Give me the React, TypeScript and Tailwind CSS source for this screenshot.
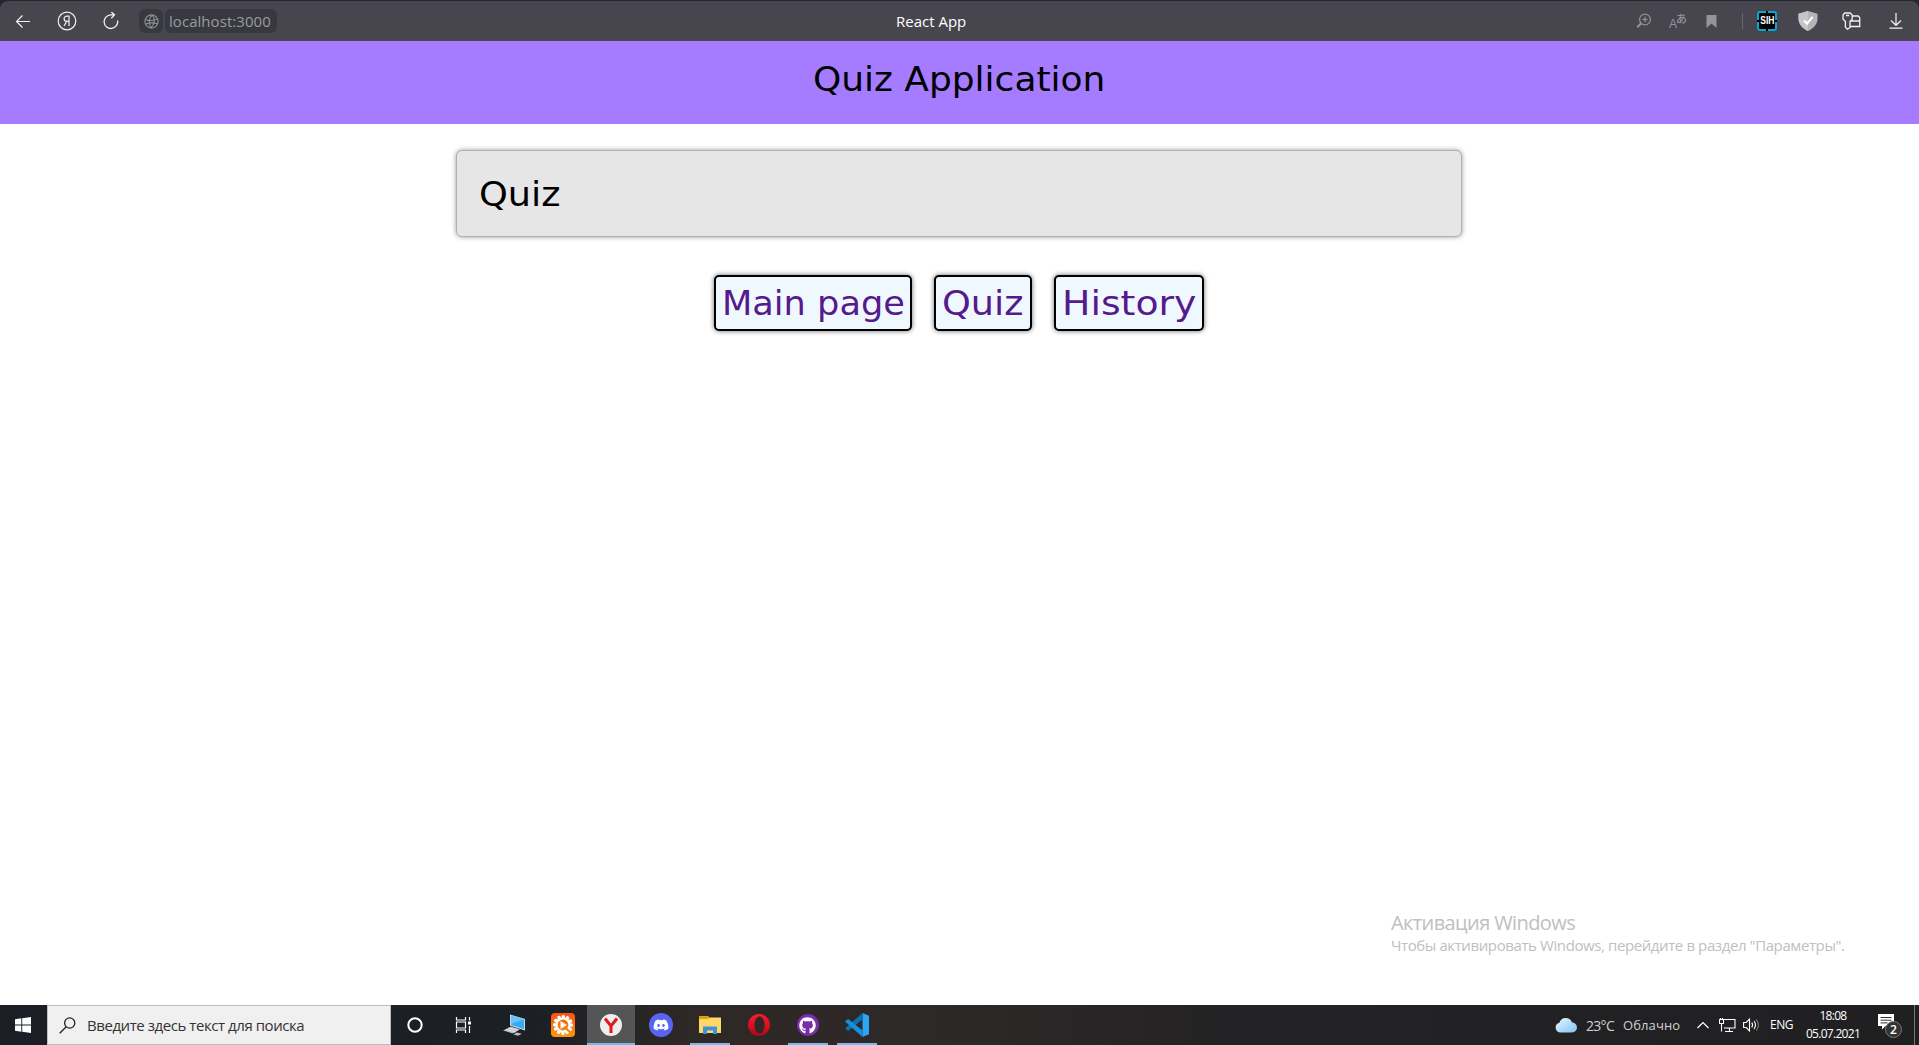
import type { ReactNode } from 'react';
import { FaDiscord, FaGithub } from 'react-icons/fa';

const ui = "font-['Open_Sans','Noto_Sans',sans-serif] whitespace-nowrap";
const display = "font-['DejaVu_Sans',sans-serif] whitespace-nowrap";

function BrowserBar() {
  return (
    <div className="flex h-[41px] shrink-0 bg-[#25252f]">
      <div className="mt-px flex h-10 w-full items-center rounded-t-lg bg-[#47464f] text-white">
        <svg className="ml-[15px] h-4 w-4" viewBox="0 0 16 16" fill="none" stroke="#f2f2f3" strokeWidth="1.2">
          <path d="M15 8.5H1.5M7.5 2.5L1.5 8.5L7.5 14.5" />
        </svg>
        <svg className="ml-[26px] h-5 w-5" viewBox="0 0 20 20" fill="none" stroke="#f2f2f3" strokeWidth="1.2">
          <circle cx="10" cy="10" r="8.8" />
          <path d="M12 15V5.2h-2c-1.9 0-2.9 1.1-2.9 2.6s1 2.6 2.9 2.6h2M9.6 10.5L7 15" />
        </svg>
        <svg className="ml-[25px] h-[18px] w-[18px]" viewBox="0 0 18 18" fill="none" stroke="#f2f2f3" strokeWidth="1.3">
          <path d="M15.6 8.5a6.8 6.8 0 1 1-6.8-5.6H12M9.3 0l3.2 2.9L9.3 6.2" />
        </svg>
        <div className="ml-[19px] flex h-6 w-6 items-center justify-center rounded-md bg-[#383840]">
          <svg className="h-[15px] w-[15px]" viewBox="0 0 15 15" fill="none" stroke="#8f8f95" strokeWidth="1.1">
            <circle cx="7.5" cy="7.5" r="6.6" />
            <path d="M8.3 1C5 3.3 4.3 9.5 6.7 14M8.3 1c2.8 3.2 2.7 9.5-1.6 13M1.2 5.4c4 1.6 8.3 1.5 12.2-.6M1.5 10.2c4-1.8 8-1.7 12.2-.2" />
          </svg>
        </div>
        <div className={`${ui} ml-[2px] flex h-6 w-28 items-center rounded-md bg-[#383840] pl-[4px] text-[15px] leading-6 text-[#9b9ba0]`}>
          <span className="tracking-[0.05px]">localhost:3000</span>
        </div>
        <span className={`${ui} ml-[619px] w-[80px] text-[15px]`}>React App</span>
        <svg className="ml-[660px] h-4 w-4" viewBox="0 0 16 16" fill="none" stroke="#94949a" strokeWidth="1.2">
          <circle cx="9" cy="6.5" r="5.4" />
          <path d="M9 3.8v5.4M6.3 6.5h5.4" />
          <path d="M5 10.5L1.2 14.3" strokeWidth="2" />
        </svg>
        <div className="ml-[17px] flex h-5 w-[19px] text-[#94949a]">
          <span className="mt-[5px] font-['Liberation_Sans',sans-serif] text-[12px] leading-4">A</span>
          <span className="-ml-px font-['Noto_Sans_CJK_JP',sans-serif] text-[11px] font-medium leading-[14px]">あ</span>
        </div>
        <svg className="ml-[18px] h-[13px] w-[11px]" viewBox="0 0 11 13"><path d="M0.5 0h10v13l-5-4.5l-5 4.5z" fill="#94949a" /></svg>
        <div className="ml-[25px] h-4 w-px bg-[#66656d]" />
        <div className="relative ml-[14px] flex h-5 w-5 items-center justify-center rounded-[3px] border-2 border-[#08a5d0] bg-black">
          <div className="absolute -top-[2px] left-[7px] h-[20px] w-[2px] bg-black" />
          <div className="absolute -left-[2px] top-[7px] h-[2px] w-[20px] bg-black" />
          <span className="relative origin-center scale-x-[0.85] font-['Liberation_Sans',sans-serif] text-[10px] font-bold leading-none">SIH</span>
        </div>
        <svg className="ml-[21px] h-5 w-5" viewBox="0 0 20 20">
          <path d="M10 0L19.5 2.8V7.5C19.5 13 15.5 17.5 10 20C4.5 17.5.5 13 .5 7.5V2.8z" fill="#b5b5b7" />
          <path d="M10 0v20C4.5 17.5.5 13 .5 7.5V2.8z" fill="#c5c5c7" />
          <path d="M6 9.5l3 3.2L14.5 6" fill="none" stroke="#fff" strokeWidth="2" />
        </svg>
        <svg className="ml-[24px] h-[18px] w-5" viewBox="0 0 20 18" fill="none" stroke="#f2f2f3" strokeWidth="1.3">
          <path d="M2.8 1h5.4L10.2 3v4.2L8 9.3V15.5L5.5 17.2L3.4 15.3V9.3L1 7.2V3zM4 3.5h3.2M10.2 4H16.2l1.5 1.5V14.5H8M8.5 9h9" />
        </svg>
        <svg className="ml-[27px] h-4 w-[14px]" viewBox="0 0 14 16" fill="none" stroke="#f2f2f3" strokeWidth="1.2">
          <path d="M7 0v12M2 7.5l5 4.8l5-4.8M.5 15.2h13" />
        </svg>
      </div>
    </div>
  );
}

function NavButton({ children, className, stretch }: { children: ReactNode; className: string; stretch: string }) {
  return (
    <a className={`${display} flex h-14 items-center rounded-[5px] border-2 border-black bg-[#f0f8ff] pl-[6px] text-[33px] text-[#551a8b] shadow-[0_0_5px_rgba(0,0,0,0.6)] ${className}`}>
      <span className={`origin-left pt-[2px] ${stretch}`}>{children}</span>
    </a>
  );
}

function Task({ children, active, running }: { children: ReactNode; active?: boolean; running?: boolean }) {
  return (
    <div className={`flex h-10 flex-col items-center ${active ? 'mr-px w-12 bg-[#555555]' : 'w-[49px]'}`}>
      <div className="flex h-[38px] w-full items-center justify-center pt-[2px]">{children}</div>
      {active && <div className="h-[2px] w-full bg-[#76b9ed]" />}
      {running && <div className="h-[2px] w-10 bg-[#76b9ed]" />}
    </div>
  );
}

function Taskbar() {
  return (
    <div className="flex h-10 shrink-0 items-center bg-[linear-gradient(90deg,#1b1e24_0%,#1c1f24_28%,#2e2826_36%,#2d2928_48%,#232224_65%,#202022_100%)] text-white">
      <div className="flex h-10 w-[47px] items-center pl-[15px]">
        <svg className="h-4 w-4" viewBox="0 0 16 16" fill="#fff">
          <path d="M0 2.2L6.3 1.3V7.5H0zM7.2 1.2L16 0V7.5H7.2zM0 8.5h6.3v6.2L0 13.8zM7.2 8.5H16V16L7.2 14.8z" />
        </svg>
      </div>
      <div className="flex h-10 w-[344px] items-center border border-[#bdbdbd] bg-[#f0f0f0] pl-[11px]">
        <svg className="h-[17px] w-[17px]" viewBox="0 0 17 17" fill="none" stroke="#222" strokeWidth="1.3">
          <circle cx="10.7" cy="6" r="5.1" />
          <path d="M7.2 9.7L.7 16.2" />
        </svg>
        <span className={`${ui} ml-[11px] text-[15px] tracking-[-0.44px] text-[#333]`}>Введите здесь текст для поиска</span>
      </div>
      <div className="-ml-px flex">
        <Task>
          <svg className="h-4 w-4" viewBox="0 0 16 16"><circle cx="8" cy="8" r="6.7" fill="none" stroke="#fff" strokeWidth="2" /></svg>
        </Task>
        <Task>
          <svg className="mr-px h-4 w-[17px]" viewBox="0 0 17 16" fill="none" stroke="#fff" strokeWidth="1.2">
            <path d="M1.5 0v3h9V0M1.5 5h9v6h-9zM1.5 16v-3h9v3M14.5 0v3.5M14.5 9v7" />
            <path d="M13 4.5h3v3h-3z" fill="#fff" stroke="none" />
          </svg>
        </Task>
        <div className="ml-px flex">
          <Task>
            <svg className="h-[22px] w-[24px]" viewBox="0 0 24 22">
              <path d="M8 .5L23 5V16.5L8 11.5z" fill="#d4eafa" />
              <path d="M8.8 1.5L22.2 5.6V15.2L8.8 10.8z" fill="#38a8f0" />
              <path d="M9 1.5L22.2 5.6L9 10z" fill="#67c4fb" />
              <path d="M9 12.5L18 15.3L11 19.5L1 16.5z" fill="#b8bec2" />
              <path d="M4 15.4l10 2.7M6.5 14l9.5 2.5" stroke="#eef1f2" strokeWidth=".8" />
              <path d="M15 18.5l5 1.3l-4 2l-4.5-1.3z" fill="#b8bec2" />
            </svg>
          </Task>
          <Task>
            <svg className="h-6 w-6" viewBox="0 0 24 24">
              <defs><linearGradient id="sun" x2="0" y2="1"><stop stopColor="#f65312" /><stop offset="1" stopColor="#ff9708" /></linearGradient></defs>
              <rect width="24" height="24" rx="4" fill="url(#sun)" />
              <circle cx="12" cy="12" r="8.4" fill="none" stroke="#fff" strokeWidth="3.4" strokeLinecap="round" strokeDasharray="0.1 4.298" />
              <circle cx="12" cy="12" r="6.6" fill="none" stroke="#fff" strokeWidth="2.4" />
              <path d="M9.5 8l6.5 4l-6.5 4z" fill="#fff" />
              <path d="M15.5 15.8l2.5 2.5" stroke="#fb7c0c" strokeWidth="2" />
            </svg>
          </Task>
          <Task active>
            <svg className="h-[22px] w-[22px]" viewBox="0 0 22 22">
              <circle cx="11" cy="11" r="11" fill="#eeeeee" />
              <path d="M5 4.5L11 12L17 4.5M11 11V19" fill="none" stroke="#e01919" strokeWidth="3" />
            </svg>
          </Task>
          <Task>
            <div className="flex h-6 w-6 items-center justify-center rounded-full bg-[#5865f2]"><FaDiscord size={16} /></div>
          </Task>
          <Task running>
            <svg className="h-[18px] w-[22px]" viewBox="0 0 22 18">
              <path d="M0 0h9l1 1.5h12V17H0z" fill="#ffd767" />
              <path d="M0 0h9l1 1.5L9 3H0z" fill="#dfa108" />
              <path d="M4 18v-7.5h14V18h-4v-3.5H8V18z" fill="#3f93d8" />
            </svg>
          </Task>
          <Task>
            <svg className="h-[22px] w-[22px]" viewBox="0 0 22 22">
              <defs><linearGradient id="opera" x2="0" y2="1"><stop stopColor="#ff1b2d" /><stop offset="1" stopColor="#b0061a" /></linearGradient></defs>
              <path fillRule="evenodd" d="M11 0a11 11 0 1 0 0 22a11 11 0 1 0 0-22zM11.5 2.5c3 0 5 3.6 5 8.5s-2 8.5-5 8.5s-5-3.6-5-8.5s2-8.5 5-8.5z" fill="url(#opera)" />
            </svg>
          </Task>
          <Task running>
            <div className="flex h-[22px] w-[22px] items-center justify-center rounded-full bg-[#7a2da8]"><FaGithub size={17} /></div>
          </Task>
          <Task running>
            <svg className="h-6 w-6" viewBox="0 0 24 24">
              <path d="M17.5 0L24 2.8V21.2L17.5 24z" fill="#2ba6f5" />
              <path d="M17.5 0V6.5L3.2 18L0 15.5z" fill="#0873b8" />
              <path d="M3.2 6L17.5 17.5V24L0 8.5z" fill="#1890dc" />
            </svg>
          </Task>
        </div>
      </div>
      <svg className="ml-[674px] h-4 w-[22px]" viewBox="0 0 22 16">
        <defs><linearGradient id="cloud" x2="1" y2="1"><stop stopColor="#eaf7ff" /><stop offset="1" stopColor="#80c2f3" /></linearGradient></defs>
        <path d="M5 15.5a5 5 0 0 1-.6-9.8A6.6 6.6 0 0 1 17 5.5a5 5 0 0 1 0 10z" fill="url(#cloud)" />
      </svg>
      <span className={`${ui} ml-[9px] w-[37px] text-[14px] tracking-[-0.7px] text-[#d0d0d0]`}>23°C</span>
      <span className={`${ui} w-[74px] pt-px text-[13px] tracking-[0.1px] text-[#d0d0d0]`}>Облачно</span>
      <svg className="h-2 w-3" viewBox="0 0 12 8" fill="none" stroke="#fff" strokeWidth="1.2"><path d="M.5 7L6 1.5L11.5 7" /></svg>
      <svg className="ml-[10px] h-[15px] w-[17px]" viewBox="0 0 17 15" fill="none" stroke="#fff" strokeWidth="1.1">
        <path d="M5 1.5h11v8.5H5M.5 1.5h4v4h-4zM2.5 5.5v8M10.5 10v3.5M6 13.5h8M1.5 0v2M3.5 0v2" />
      </svg>
      <svg className="ml-[7px] h-4 w-[17px]" viewBox="0 0 17 16" fill="none" stroke="#fff" strokeWidth="1.1">
        <path d="M.6 5.5h2.6L6.5 2.2v11.6L3.2 10.5H.6zM8.7 5.7q1.8 2.3 0 4.6M11 4q3 4 0 8" />
        <path d="M13.3 2.3q4.3 5.7 0 11.4" stroke="#777" />
      </svg>
      <span className={`${ui} ml-[10px] w-[36px] text-[12px] tracking-[-0.5px]`}>ENG</span>
      <div className={`${ui} flex h-10 w-[54px] flex-col items-center pt-[2px] text-[12px] leading-[18px] tracking-[-0.7px]`}>
        <span>18:08</span>
        <span>05.07.2021</span>
      </div>
      <div className="relative ml-[18px] h-6 w-6 pt-px">
        <svg className="h-[17px] w-[17px]" viewBox="0 0 17 17"><path d="M0 0h16v12H7.5L4 15.5V12H0z" fill="#fff" /><path d="M2.5 3.5h11M2.5 6.2h11M2.5 8.9h7" stroke="#333" /></svg>
        <span className={`${ui} absolute left-[7px] top-[8px] flex h-[17px] w-[17px] items-center justify-center rounded-full border border-[#777] bg-[#333] text-[12px] font-semibold leading-none`}>2</span>
      </div>
      <div className="ml-auto mr-1 h-10 w-px bg-[#77777a]" />
    </div>
  );
}

export default function App() {
  return (
    <div className="flex h-[1045px] w-[1919px] flex-col overflow-hidden bg-white">
      <BrowserBar />
      <header className="flex h-[83px] shrink-0 justify-center bg-[#a57bff] pt-[16px]">
        <h1 className={`${display} scale-x-[1.09] text-[33px] leading-[46px] text-black`}>Quiz Application</h1>
      </header>
      <main className="flex grow flex-col items-center pt-[26px]">
        <section className="mr-px flex h-[87px] w-[1006px] items-center rounded-[6px] border border-[#b0b0b0] bg-[#e6e6e6] pl-[22px] shadow-[0_0_5px_rgba(0,0,0,0.4)]">
          <h2 className={`${display} origin-left scale-x-[1.11] pt-[2px] text-[33px] text-black`}>Quiz</h2>
        </section>
        <nav className="mr-px mt-[38px] flex gap-[22px]">
          <NavButton className="w-[198px]" stretch="scale-x-[1.065]">Main page</NavButton>
          <NavButton className="w-[98px]" stretch="scale-x-[1.11]">Quiz</NavButton>
          <NavButton className="w-[150px]" stretch="scale-x-[1.145]">History</NavButton>
        </nav>
        <aside className={`${ui} mb-[49px] ml-[1391px] mt-auto self-start text-[#c0c0c0]`}>
          <p className="text-[20px] leading-[24px] tracking-[-0.6px]">Активация Windows</p>
          <p className="text-[15px] leading-[21px] tracking-[-0.4px]">Чтобы активировать Windows, перейдите в раздел "Параметры".</p>
        </aside>
      </main>
      <Taskbar />
    </div>
  );
}
